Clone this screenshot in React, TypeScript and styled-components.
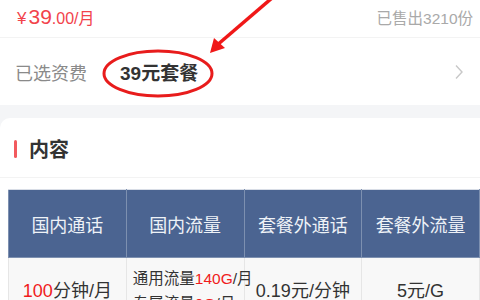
import React from 'react';
import styled, {createGlobalStyle} from "styled-components";

const GlobalStyle = createGlobalStyle`
    html, body {
        margin: 0;
        padding: 0;
        background: #f4f5f7;
        font-family: "Liberation Sans", "Noto Sans CJK SC", sans-serif;
        overflow: hidden;
    }
`

const headers = ["国内通话", "国内流量", "套餐外通话", "套餐外流量"]

export default function App() {
    return (
        <Page>
            <GlobalStyle/>
            <PriceRow>
                <Price>
                    <Yen>¥</Yen>
                    <Big>39</Big>
                    <Small>.00/月</Small>
                </Price>
                <Sold>已售出3210份</Sold>
            </PriceRow>
            <SelectRow>
                <Label>已选资费</Label>
                <Chosen>39元套餐</Chosen>
                <Chevron viewBox="0 0 10 16">
                    <path d="M2 1.5 L8 8 L2 14.5" fill="none" stroke="#c8c8c8" strokeWidth="1.4"/>
                </Chevron>
            </SelectRow>
            <Gap/>
            <Card>
                <CardTitle>
                    <TitleBar/>
                    <TitleText>内容</TitleText>
                </CardTitle>
                <Table>
                    <thead>
                        <tr>
                            {headers.map((h, i) => <Th key={i}>{h}</Th>)}
                        </tr>
                    </thead>
                    <tbody>
                        <tr>
                            <Td><Red>100</Red>分钟/月</Td>
                            <Td small>
                                <div>通用流量<Red>140G</Red>/月</div>
                                <div>专属流量<Red>0G</Red>/月</div>
                            </Td>
                            <Td>0.19元/分钟</Td>
                            <Td>5元/G</Td>
                        </tr>
                    </tbody>
                </Table>
            </Card>
            <Marks viewBox="0 0 480 300">
                <ellipse cx="158" cy="73.5" rx="54" ry="22.5" fill="none" stroke="#e81c1c" strokeWidth="3"/>
                <line x1="272" y1="-2" x2="216" y2="46" stroke="#f01818" strokeWidth="3.5"/>
                <polygon points="210,53 214,38 225,48" fill="#f01818"/>
            </Marks>
        </Page>
    );
}

const Page = styled.div`
    position: relative;
    width: 480px;
    height: 300px;
    overflow: hidden;
`

const PriceRow = styled.div`
    height: 38px;
    background: #fff;
    border-bottom: 1px solid #f3f3f3;
    display: flex;
    justify-content: space-between;
    align-items: flex-end;
    padding: 0 7px 10px 17px;
    box-sizing: border-box;
`

const Price = styled.div`
    color: #f2434b;
    line-height: 1;
`

const Yen = styled.span`
    font-size: 17px;
    margin-right: 2px;
`

const Big = styled.span`
    font-size: 21px;
`

const Small = styled.span`
    font-size: 16px;
`

const Sold = styled.span`
    color: #a9a9a9;
    font-size: 15.5px;
    line-height: 1;
    padding-bottom: 1px;
`

const SelectRow = styled.div`
    height: 67px;
    background: #fff;
    display: flex;
    align-items: center;
    padding: 0 16px 0 15px;
`

const Label = styled.span`
    color: #8a8a8a;
    font-size: 18px;
    width: 105px;
`

const Chosen = styled.span`
    color: #333;
    font-size: 19px;
    font-weight: bold;
    flex: 1;
`

const Chevron = styled.svg`
    width: 10px;
    height: 16px;
`

const Gap = styled.div`
    height: 12px;
`

const Card = styled.div`
    background: #fff;
    border-top-left-radius: 10px;
    margin-top: 1px;
    margin-right: -20px;
    padding: 0 28px 0 8px;
`

const CardTitle = styled.div`
    height: 60px;
    display: flex;
    align-items: center;
    gap: 12px;
    padding: 2px 0 0 14px;
    box-sizing: border-box;
    border-bottom: 1px solid #f3f3f3;
    margin-left: -8px;
    margin-right: -28px;
`

const TitleBar = styled.span`
    width: 3px;
    height: 18px;
    border-radius: 2px;
    background: #f25a5e;
`

const TitleText = styled.span`
    font-size: 20px;
    font-weight: bold;
    color: #333;
`

const Table = styled.table`
    margin-top: 11px;
    border-collapse: collapse;
    table-layout: fixed;
    width: 472px;
`

const Th = styled.th`
    background: #4b6491;
    color: #eef2f7;
    font-weight: normal;
    font-size: 18px;
    height: 65px;
    border: 1px solid #7d90b0;
    border-top-color: #d8dde6;
`

const Td = styled.td<{small?: boolean}>`
    background: #f8f8f8;
    border: 1px solid #e6e6e6;
    color: #333;
    font-size: ${p => p.small ? "15.5px" : "18px"};
    line-height: ${p => p.small ? "25px" : "22px"};
    height: 70px;
    vertical-align: top;
    text-align: ${p => p.small ? "left" : "center"};
    padding: ${p => p.small ? "8px 0 0 6px" : "22px 0 0"};
    white-space: nowrap;
`

const Red = styled.span`
    color: #f01c1c;
`

const Marks = styled.svg`
    position: absolute;
    left: 0;
    top: 0;
    width: 480px;
    height: 300px;
    pointer-events: none;
`
